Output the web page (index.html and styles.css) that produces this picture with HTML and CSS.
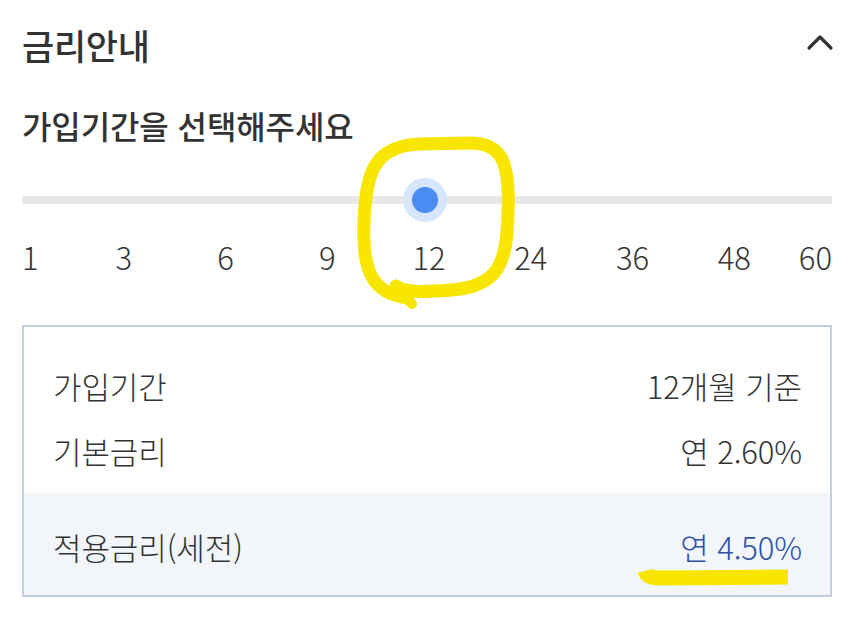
FILE: index.html
```html
<!DOCTYPE html>
<html lang="ko">
<head>
<meta charset="utf-8">
<link rel="stylesheet" href="styles.css">
</head>
<body>
<div class="page">
  <header class="head">
    <h1 class="title">금리안내</h1>
    <svg class="chev" width="28" height="20" viewBox="0 0 28 20"><path d="M3 15 L14 4 L25 15" fill="none" stroke="#333" stroke-width="3.2" stroke-linecap="round" stroke-linejoin="round"/></svg>
  </header>
  <h2 class="sub">가입기간을 선택해주세요</h2>
  <div class="slider">
    <div class="track">
      <span class="thumb"></span>
    </div>
  </div>
  <div class="ticks">
    <span>1</span><span>3</span><span>6</span><span>9</span><span>12</span><span>24</span><span>36</span><span>48</span><span>60</span>
  </div>
  <div class="box">
    <div class="rows">
      <div class="row"><span>가입기간</span><span>12개월 기준</span></div>
      <div class="row"><span>기본금리</span><span>연 2.60%</span></div>
    </div>
    <div class="applied">
      <div class="row"><span>적용금리(세전)</span><span class="blue">연 4.50%</span></div>
    </div>
  </div>
</div>
<svg class="marks" width="862" height="631" viewBox="0 0 862 631">
  <path d="M408 298 C372 294 362 270 364 222 C366 172 374 146 420 144 L470 143 C502 143 510 162 508 212 C507 262 500 286 452 290 C424 292 404 293 396 286" fill="none" stroke="#f8e600" stroke-width="13" stroke-linecap="round"/>
  <path d="M398 290 L412 304" stroke="#f8e600" stroke-width="10" stroke-linecap="round"/>
  <path d="M645 571 Q647 578 660 578 L788 577" fill="none" stroke="#f8e600" stroke-width="15" stroke-linecap="butt"/>
</svg>
</body>
</html>
```
FILE: styles.css
```css
html, body {
  margin: 0;
  padding: 0;
  background: #fff;
}
body {
  font-family: "Noto Sans CJK KR", "Noto Sans", sans-serif;
  color: #333;
}
.page {
  width: 810px;
  padding: 0 30px 0 22px;
}
.head {
  display: flex;
  justify-content: space-between;
  align-items: center;
  height: 90px;
}
.title {
  margin: 0;
  font-size: 35px;
  font-weight: 500;
  line-height: 40px;
  letter-spacing: -0.3px;
}
.chev {
  display: block;
  margin-right: -2px;
  margin-top: -4px;
}
.sub {
  margin: 0;
  font-size: 32px;
  font-weight: 500;
  line-height: 40px;
  letter-spacing: -0.1px;
  padding-top: 15px;
}
.slider {
  padding-top: 51px;
  height: 8px;
}
.track {
  position: relative;
  height: 8px;
  background: #e8e8e8;
}
.thumb {
  position: absolute;
  left: 381px;
  top: -18px;
  width: 26px;
  height: 26px;
  border-radius: 50%;
  background: #4a8cf1;
  border: 9px solid #d6e6fc;
}
.ticks {
  display: flex;
  justify-content: space-between;
  margin-top: 33px;
  font-size: 31px;
  font-weight: 300;
  line-height: 40px;
}
.ticks span {
  width: 0;
  display: flex;
  justify-content: center;
  white-space: nowrap;
  padding-left: 4px;
}
.ticks span:first-child {
  justify-content: flex-start;
  padding-left: 0;
}
.ticks span:last-child {
  justify-content: flex-end;
  padding-left: 0;
}
.box {
  margin-top: 48px;
  border: 2px solid #c3cee3;
}
.rows {
  padding: 38px 28px 23px 29px;
}
.row {
  display: flex;
  justify-content: space-between;
  align-items: center;
  height: 40px;
  font-size: 31px;
  font-weight: 300;
  letter-spacing: -0.1px;
}
.rows .row + .row {
  margin-top: 25px;
}
.applied {
  background: #f2f6fb;
  padding: 33px 28px 29px 29px;
}
.blue {
  color: #2f4fa5;
}
.marks {
  position: absolute;
  left: 0;
  top: 0;
  pointer-events: none;
}
```
